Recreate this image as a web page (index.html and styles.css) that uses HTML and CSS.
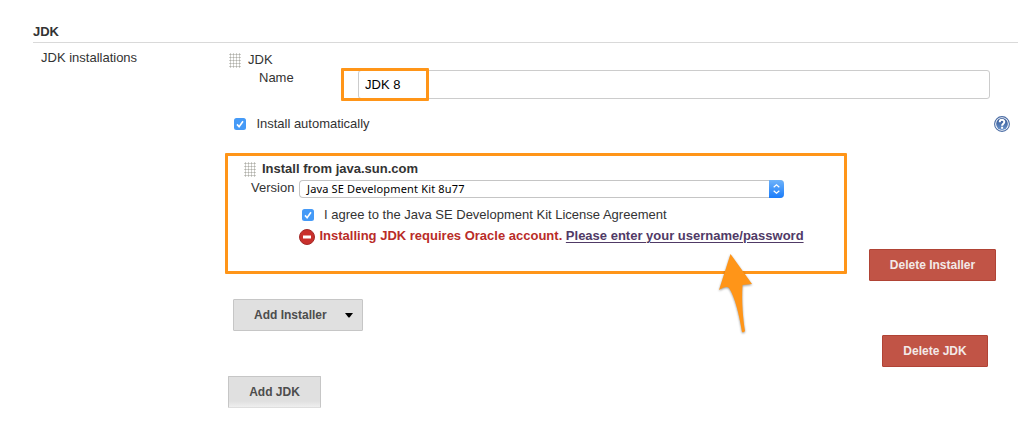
FILE: index.html
```html
<!DOCTYPE html>
<html lang="en">
<head>
<meta charset="utf-8">
<title>JDK configuration</title>
<link rel="stylesheet" href="styles.css">
</head>
<body>
<h1 class="section-title"><span>JDK</span></h1>
<main class="section">
  <div class="section-label"><span>JDK installations</span></div>
  <div class="content">
    <div class="jdk-head"><i class="handle"></i><span>JDK</span></div>
    <div class="name-row">
      <label class="name-label" for="name">Name</label>
      <div class="name-field">
        <input id="name" class="name-input" type="text" value="JDK 8">
        <div class="name-highlight"></div>
      </div>
    </div>
    <div class="auto-row">
      <svg class="check" viewBox="0 0 12 12"><rect width="12" height="12" rx="2.5" fill="#459af7"/><path d="M3 6.4 5.1 8.7 9 3.3" fill="none" stroke="#fff" stroke-width="1.6"/></svg>
      <span class="auto-text">Install automatically</span>
      <svg class="help" viewBox="0 0 16 16"><defs><linearGradient id="navy" x2="0" y2="1"><stop stop-color="#2f5291"/><stop offset="1" stop-color="#6a93cb"/></linearGradient></defs><circle cx="8" cy="8" r="7.4" fill="#fff" stroke="#4b6da5" stroke-width="1.1"/><circle cx="8" cy="8" r="5.9" fill="url(#navy)"/><path d="M5.7 6.2C5.700 3 10.500 3.200 10.300 6 10.100 7.700 8.100 7.700 8.100 9.700M8.100 10.800v1.900" fill="none" stroke="#fff" stroke-width="2"/></svg>
    </div>
    <div class="installer-row">
      <section class="installer">
        <div class="installer-head"><i class="handle"></i><span>Install from java.sun.com</span></div>
        <div class="version-row">
          <span class="version-label">Version</span>
          <div class="select">
            <span class="select-text">Java SE Development Kit 8u77</span>
            <svg class="stepper" viewBox="0 0 15 18"><defs><linearGradient id="blue" x2="0" y2="1"><stop stop-color="#6eb3fa"/><stop offset="1" stop-color="#1a7cfa"/></linearGradient></defs><path d="M0 0H11Q15 0 15 4V14Q15 18 11 18H0Z" fill="url(#blue)"/><path d="M4.7 7.2 7.5 4.7 10.3 7.2M4.7 10.8 7.5 13.3 10.3 10.8" fill="none" stroke="#fff" stroke-width="1.2"/></svg>
          </div>
        </div>
        <div class="agree-row">
          <svg class="check" viewBox="0 0 12 12"><rect width="12" height="12" rx="2.5" fill="#459af7"/><path d="M3 6.4 5.1 8.7 9 3.3" fill="none" stroke="#fff" stroke-width="1.6"/></svg>
          <span class="agree-text">I agree to the Java SE Development Kit License Agreement</span>
        </div>
        <div class="error-row">
          <svg class="stop" viewBox="0 0 16 16"><circle cx="8" cy="8" r="7.5" fill="#c9302c" stroke="#a32a28"/><rect x="4" y="6.500" width="8" height="3" fill="#fff"/></svg>
          <span class="error-text">Installing JDK requires Oracle account. <a class="link" href="#">Please enter your username/password</a></span>
        </div>
        <svg class="arrow" viewBox="0 0 40 84"><path d="M13.500 2 35 32 25.500 33C24.500 50 26 66 28 79Q26.500 81 25 80C22 62 18 45 12 36Q9.500 33.500 2 38Z" fill="#ff9518"/></svg>
      </section>
      <button class="btn danger del-installer">Delete Installer</button>
    </div>
    <button class="btn add-installer"><span>Add Installer</span><svg class="caret" viewBox="0 0 8 5"><path d="M0 0H8L4.500 4.500H3.500Z"/></svg></button>
    <button class="btn danger del-jdk">Delete JDK</button>
    <button class="btn add-jdk">Add JDK</button>
  </div>
</main>
</body>
</html>
```
FILE: styles.css
```css
* { box-sizing: border-box; }
body {
  margin: 0;
  height: 423px;
  overflow: hidden;
  background: #fff;
  color: #333;
  font: 13px/16px "Liberation Sans", Arial, sans-serif;
}
span { white-space: nowrap; }
svg { display: block; flex: none; }
.section-title {
  margin: 0 0 0 33px;
  padding-top: 24px;
  height: 43px;
  border-bottom: 1px solid #d9d9d9;
  font-size: 13px;
  line-height: 16px;
}
.section { display: flex; }
.section-label { width: 228px; padding: 7px 0 0 41px; flex: none; }
.content { width: 790px; display: flex; flex-direction: column; align-items: flex-start; }
.handle {
  flex: none;
  width: 12px;
  height: 15px;
  background: radial-gradient(circle at 1.5px 1.5px, #b0b0aa 0 .8px, transparent 1.3px) 0 0 / 3px 3px;
}
.jdk-head { display: flex; align-items: center; gap: 7px; height: 16px; margin: 9px 0 0 1px; }
.name-row { display: flex; margin: 2px 0 0 31px; height: 29px; }
.name-label { width: 99px; }
.name-field { position: relative; width: 632px; }
.name-input {
  display: block;
  width: 100%;
  height: 29px;
  padding: 0 6px;
  border: 1px solid #ccc;
  border-radius: 3px;
  color: #000;
  background: #fff;
  font: inherit;
  outline: none;
}
.name-highlight {
  position: absolute;
  left: -17px;
  top: -2px;
  width: 88px;
  height: 33px;
  border: 3px solid #ff9518;
  border-radius: 1px;
}
.auto-row { display: flex; align-items: center; width: 782px; height: 16px; margin: 17px 0 0; padding-left: 6px; }
.check { width: 12px; height: 12px; }
.auto-text { margin-left: 10.5px; letter-spacing: -.02px; }
.help { width: 16px; height: 16px; margin-left: auto; }
.installer-row { display: flex; align-items: flex-start; margin: 21px 0 0 -3px; height: 128px; }
.installer { position: relative; width: 622px; height: 121px; border: 3px solid #ff9518; border-radius: 1px; }
.installer-head { display: flex; align-items: center; gap: 6px; height: 16px; margin: 5px 0 0 16px; font-weight: bold; }
.version-row { display: flex; margin: 3px 0 0 23px; height: 18px; }
.version-label { width: 48px; }
.select { display: flex; justify-content: space-between; align-items: center; width: 485px; height: 18px; border: 1px solid #c5c5c5; border-right: 0; border-radius: 4px; padding-left: 7px; }
.select-text { color: #000; font: 11px/16px "Noto Sans", sans-serif; letter-spacing: .16px; }
.stepper { width: 15px; height: 18px; }
.agree-row { display: flex; align-items: center; height: 16px; margin: 9px 0 0 74px; }
.agree-text { margin-left: 10px; }
.error-row { display: flex; align-items: flex-start; height: 16px; margin: 6px 0 0 71px; color: #b92c28; font-weight: bold; }
.stop { width: 16px; height: 16px; }
.error-text { margin: -1px 0 0 4.5px; }
.link { color: #503a66; text-decoration: underline; text-underline-offset: 2px; text-decoration-thickness: 1px; }
.arrow { position: absolute; left: 489px; top: 96px; width: 40px; height: 84px; filter: drop-shadow(0 1px 1px rgba(0, 0, 0, .4)); }
.btn {
  height: 32px;
  padding: 0;
  border: 1px solid #c6c6c6;
  border-radius: 1px;
  background: #e0e0e0;
  color: #4d4d4d;
  font: bold 12px/30px "Liberation Sans", Arial, sans-serif;
}
.danger { background: #c15446; border-color: #b04335; color: #f3e9e8; }
.del-installer { width: 127px; margin: 96px 0 0 22px; }
.add-installer { display: flex; align-items: center; width: 130px; margin: 18px 0 0 5px; padding-left: 20px; }
.caret { width: 8px; height: 5px; margin-left: auto; margin-right: 9px; }
.del-jdk { width: 106px; margin: 4px 0 0 654px; }
.add-jdk { width: 93px; margin-top: 9px; background: linear-gradient(#e0e0e0 80%, #efefef); border-bottom-color: #dedede; }
```
